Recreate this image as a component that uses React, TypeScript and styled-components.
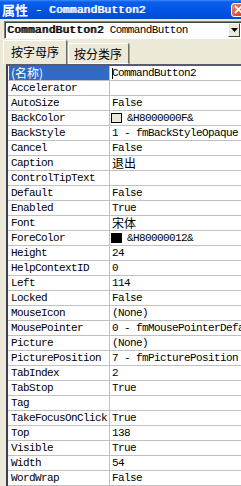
import styled, { createGlobalStyle } from "styled-components"

const GlobalStyle = createGlobalStyle`
  html, body {
    margin: 0;
    padding: 0;
    background: #ece9d8;
  }
`

const MONO = `"Liberation Mono", "Noto Sans CJK SC", monospace`
const CJK = `"Noto Sans CJK SC", "Liberation Sans", sans-serif`

const Window = styled.div`
  width: 241px;
  height: 486px;
  overflow: hidden;
  background: #ece9d8;
  display: flex;
  flex-direction: column;
`

const TitleBar = styled.div`
  height: 19px;
  flex: none;
  display: flex;
  align-items: center;
  padding-left: 2px;
  background: linear-gradient(#3d8bff 0, #0a5fea 2px, #0055e5 55%, #004ad0 100%);
  color: #fff;
  white-space: nowrap;
  overflow: hidden;
`

const TitleCjk = styled.span`
  font-family: ${CJK};
  font-weight: 700;
  font-size: 13px;
  line-height: 19px;
  margin-right: 7px;
`

// faux bold on the regular face: 6.6px advance + 0.3px spacing ≈ 6.9px a char
const BoldMono = styled.span`
  flex: none;
  font-family: ${MONO};
  font-size: 11px;
  font-weight: 400;
  letter-spacing: 0.3px;
  text-shadow: 1px 0 0 currentColor;
  line-height: 16px;
  white-space: pre;
`

const CloseButton = styled.div`
  margin-left: auto;
  margin-right: -11px;
  width: 21px;
  height: 14px;
  border: 1px solid #fff;
  border-radius: 3px;
  background: linear-gradient(135deg, #f08a6c, #d9482a 60%, #c2371b);
  display: flex;
  align-items: center;
  padding-left: 2px;
  box-sizing: border-box;
  flex: none;
`

const Combo = styled.div`
  flex: none;
  margin: 2px 0 0 4px;
  height: 18px;
  box-sizing: border-box;
  background: #fff;
  border-top: 1px solid #808080;
  border-left: 1px solid #808080;
  border-bottom: 1px solid #fff;
  box-shadow: inset 1px 1px 0 #404040;
  display: flex;
  align-items: center;
  gap: 6px;
  padding-left: 2px;
  white-space: nowrap;
  color: #000;
`

const ComboText = styled.span`
  flex: none;
  font-family: ${MONO};
  font-size: 11px;
  letter-spacing: -0.6px;
  line-height: 16px;
`

const DropButton = styled.div`
  margin-left: auto;
  margin-right: 1px;
  width: 12px;
  height: 14px;
  flex: none;
  box-sizing: border-box;
  background: #ece9d8;
  border-top: 1px solid #fff;
  border-left: 1px solid #fff;
  border-right: 1px solid #404040;
  border-bottom: 1px solid #404040;
  display: flex;
  align-items: center;
  justify-content: center;
`

const TabStrip = styled.div`
  flex: none;
  height: 25px;
  display: flex;
  align-items: flex-end;
  padding-left: 3px;
`

const Tab = styled.div<{ $active?: boolean }>`
  height: ${(p) => (p.$active ? "24px" : "21px")};
  box-sizing: border-box;
  padding: ${(p) => (p.$active ? "2px 7px 0 7px" : "1px 6px 0 5px")};
  margin-left: ${(p) => (p.$active ? "0" : "1px")};
  background: #ece9d8;
  border-top: 1px solid #fff;
  border-left: 1px solid #fff;
  border-right: 1px solid #716f64;
  border-bottom: ${(p) => (p.$active ? "none" : "1px solid #fff")};
  box-shadow: 1px 0 0 #aca899;
  border-radius: 2px 2px 0 0;
  font-family: ${CJK};
  font-size: 12px;
  line-height: 18px;
  color: #000;
`

const Grid = styled.div`
  flex: 1;
  margin-left: 6px;
  border-top: 2px solid #5a5a6e;
  border-left: 2px solid #3e3e58;
  background: #fff;
  overflow: hidden;
`

const Row = styled.div`
  height: 15px;
  box-sizing: border-box;
  border-bottom: 1px solid #c0c0c0;
  display: flex;
  white-space: nowrap;
`

const NameCell = styled.div`
  width: 102px;
  flex: none;
  box-sizing: border-box;
  border-right: 1px solid #c0c0c0;
  padding-left: 1px;
  display: flex;
`

const NameLabel = styled.div<{ $selected?: boolean }>`
  flex: 1;
  padding-left: 2px;
  background: ${(p) => (p.$selected ? "#316ac5" : "transparent")};
  color: ${(p) => (p.$selected ? "#fff" : "#000")};
  font-family: ${MONO};
  font-size: 11px;
  letter-spacing: -0.6px;
  line-height: 14px;
`

const ValueCell = styled.div`
  flex: 1;
  padding-left: 2px;
  display: flex;
  align-items: center;
  font-family: ${MONO};
  font-size: 11px;
  letter-spacing: -0.6px;
  line-height: 14px;
  color: #000;
`

const Cjk = styled.span`
  font-family: ${CJK};
  font-size: 12px;
  letter-spacing: 0;
  line-height: 14px;
`

const Swatch = styled.span<{ $color: string }>`
  width: 11px;
  height: 10px;
  box-sizing: border-box;
  border: 1px solid #000;
  background: ${(p) => p.$color};
  margin: 0 5px 0 -1px;
  flex: none;
`

const Caret = styled.span`
  width: 1px;
  height: 11px;
  background: #000;
  margin-right: -1px;
  flex: none;
`

type Prop = {
  name: string
  value: string
  cjkName?: boolean
  cjkValue?: boolean
  swatch?: string
  selected?: boolean
}

const props: Prop[] = [
  { name: "(名称)", value: "CommandButton2", cjkName: true, selected: true },
  { name: "Accelerator", value: "" },
  { name: "AutoSize", value: "False" },
  { name: "BackColor", value: "&H8000000F&", swatch: "#ece9d8" },
  { name: "BackStyle", value: "1 - fmBackStyleOpaque" },
  { name: "Cancel", value: "False" },
  { name: "Caption", value: "退出", cjkValue: true },
  { name: "ControlTipText", value: "" },
  { name: "Default", value: "False" },
  { name: "Enabled", value: "True" },
  { name: "Font", value: "宋体", cjkValue: true },
  { name: "ForeColor", value: "&H80000012&", swatch: "#000" },
  { name: "Height", value: "24" },
  { name: "HelpContextID", value: "0" },
  { name: "Left", value: "114" },
  { name: "Locked", value: "False" },
  { name: "MouseIcon", value: "(None)" },
  { name: "MousePointer", value: "0 - fmMousePointerDefault" },
  { name: "Picture", value: "(None)" },
  { name: "PicturePosition", value: "7 - fmPicturePosition" },
  { name: "TabIndex", value: "2" },
  { name: "TabStop", value: "True" },
  { name: "Tag", value: "" },
  { name: "TakeFocusOnClick", value: "True" },
  { name: "Top", value: "138" },
  { name: "Visible", value: "True" },
  { name: "Width", value: "54" },
  { name: "WordWrap", value: "False" },
]

export default function App() {
  return (
    <>
      <GlobalStyle />
      <Window>
        <TitleBar>
          <TitleCjk>属性</TitleCjk>
          <BoldMono>- CommandButton2</BoldMono>
          <CloseButton>
            <svg width="9" height="9" viewBox="0 0 9 9">
              <path d="M1 1L8 8M8 1L1 8" stroke="#fff" strokeWidth="1.8" />
            </svg>
          </CloseButton>
        </TitleBar>

        <Combo>
          <BoldMono>CommandButton2</BoldMono>
          <ComboText>CommandButton</ComboText>
          <DropButton>
            <svg width="7" height="4" viewBox="0 0 7 4">
              <path d="M0 0H7L3.5 4Z" fill="#000" />
            </svg>
          </DropButton>
        </Combo>

        <TabStrip>
          <Tab $active>按字母序</Tab>
          <Tab>按分类序</Tab>
        </TabStrip>

        <Grid>
          {props.map((p) => (
            <Row key={p.name}>
              <NameCell>
                <NameLabel $selected={p.selected}>
                  {p.cjkName ? <Cjk>{p.name}</Cjk> : p.name}
                </NameLabel>
              </NameCell>
              <ValueCell>
                {p.selected && <Caret />}
                {p.swatch && <Swatch $color={p.swatch} />}
                {p.cjkValue ? <Cjk>{p.value}</Cjk> : p.value}
              </ValueCell>
            </Row>
          ))}
        </Grid>
      </Window>
    </>
  )
}
